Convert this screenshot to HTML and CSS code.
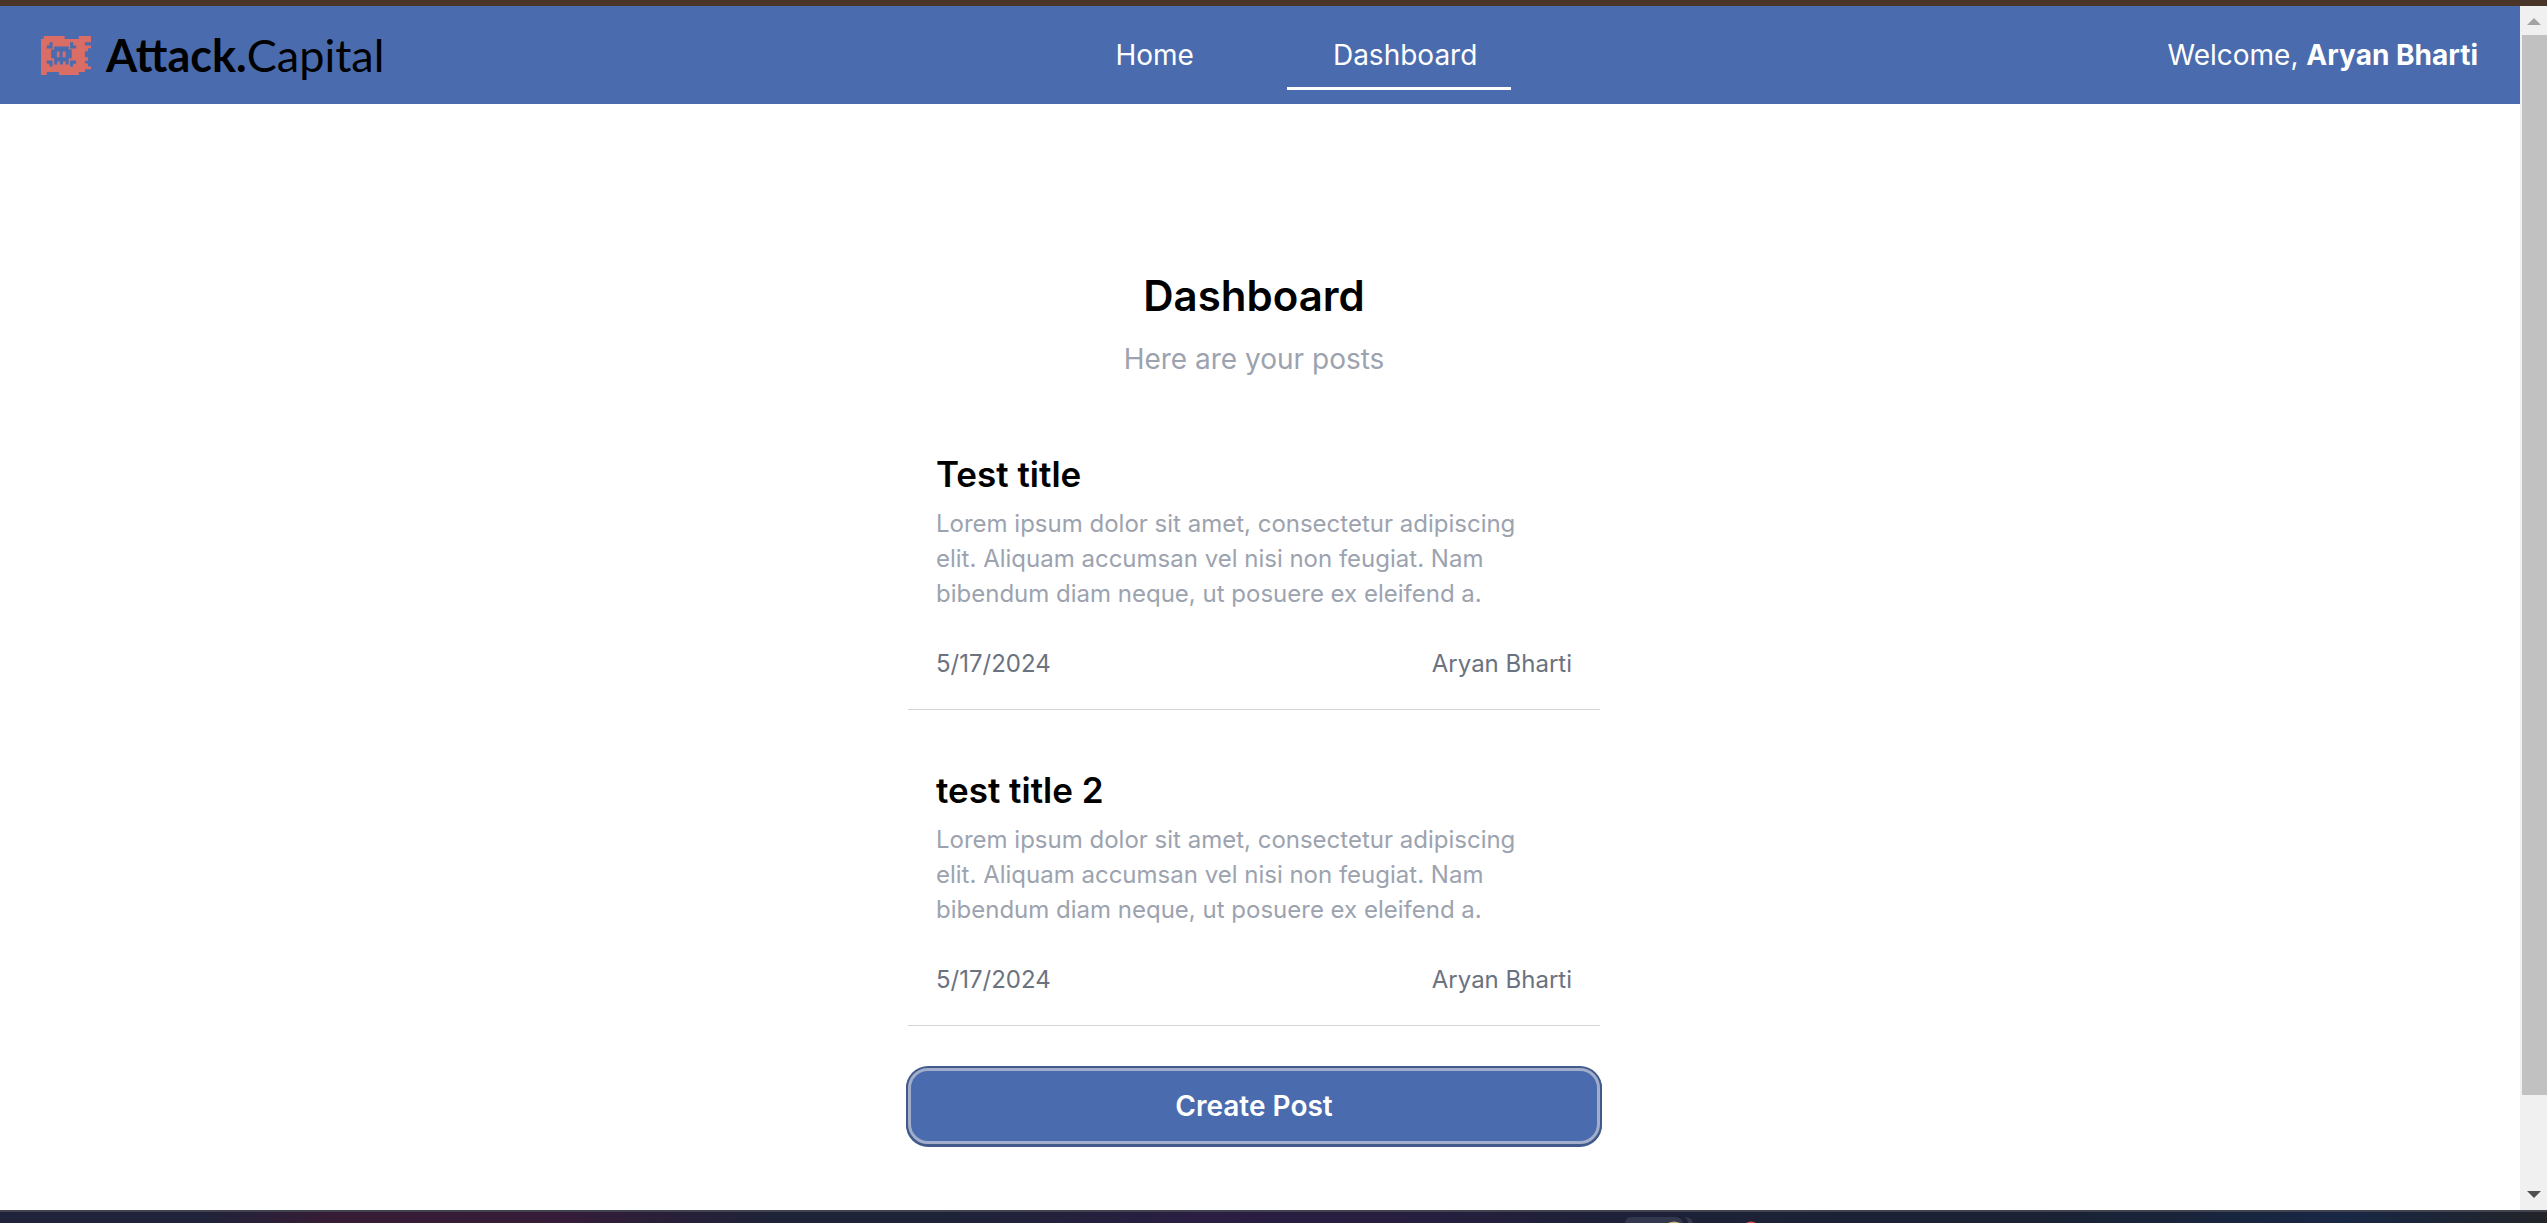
FILE: index.html
```html
<!DOCTYPE html>
<html lang="en">
<head>
<meta charset="utf-8">
<meta name="viewport" content="width=device-width, initial-scale=1">
<title>Dashboard</title>
<link rel="stylesheet" href="styles.css">
</head>
<body>
<div class="window-edge"></div>
<div class="viewport">
  <div class="page">
    <header class="header">
      <a class="logo" href="#">
        <svg class="logo-mark" viewBox="0 0 148 115" aria-hidden="true">
          <path class="logo-flag" d="M8 0H70V9H112V0H148V18H130V28H148V36H139V45H130V63H139V73H130V81H139V90H148V98H130V106H112V115H53V106H17V115H0V9H8Z"/>
          <path class="logo-skull" d="M39 31H82V40H91V66H82V84H73V75H65V84H56V75H48V84H39V66H30V40H39Z"/>
          <path class="logo-skull" d="M25 18H34V37H17V28H25ZM86 18H95V28H104V37H86ZM17 72H34V90H25V82H17ZM86 72H104V82H95V90H86Z"/>
          <path class="logo-flag" d="M47 46H55V63H47ZM64 46H73V63H64Z"/>
        </svg>
        <span class="logo-text"><b>Attack.</b>Capital</span>
      </a>
      <nav class="nav">
        <a class="nav-link" href="#">Home</a>
        <a class="nav-link nav-link-active" href="#" aria-current="page">Dashboard</a>
      </nav>
      <p class="welcome">Welcome, <strong>Aryan Bharti</strong></p>
    </header>
    <main class="main">
      <div class="column">
        <h1 class="heading">Dashboard</h1>
        <p class="subheading">Here are your posts</p>
        <article class="post">
          <h2 class="post-title">Test title</h2>
          <p class="post-body">Lorem ipsum dolor sit amet, consectetur adipiscing elit. Aliquam accumsan vel nisi non feugiat. Nam bibendum diam neque, ut posuere ex eleifend a.</p>
          <footer class="post-meta"><time datetime="2024-05-17">5/17/2024</time><span>Aryan Bharti</span></footer>
        </article>
        <article class="post">
          <h2 class="post-title">test title 2</h2>
          <p class="post-body">Lorem ipsum dolor sit amet, consectetur adipiscing elit. Aliquam accumsan vel nisi non feugiat. Nam bibendum diam neque, ut posuere ex eleifend a.</p>
          <footer class="post-meta"><time datetime="2024-05-17">5/17/2024</time><span>Aryan Bharti</span></footer>
        </article>
        <button class="create" type="button">Create Post</button>
      </div>
    </main>
  </div>
  <div class="scrollbar" aria-hidden="true">
    <svg class="scroll-arrow" viewBox="0 0 27 29"><path fill="#a3a3a3" d="M14 12L21 19H7Z"/></svg>
    <div class="scroll-track"><div class="scroll-thumb"></div></div>
    <svg class="scroll-arrow" viewBox="0 0 27 29"><path fill="#505050" d="M7 10H21L14 17Z"/></svg>
  </div>
</div>
<div class="taskbar" aria-hidden="true">
  <svg class="taskbar-icons" viewBox="0 0 134 11">
    <path fill="#34384e" d="M0 11V10Q1 5 7 5H50Q57 5 58 11ZM59 5Q67 5 68 11H63Q63 7 59 5Z"/>
    <path fill="#c9ad6a" d="M43 11Q49 8 55 11Z"/>
    <path fill="#e25555" d="M121 11Q126 8 131 11Z"/>
  </svg>
</div>
</body>
</html>
```

FILE: styles.css
```css
* {
  box-sizing: border-box;
  margin: 0;
}

body {
  display: flex;
  flex-direction: column;
  min-height: 100vh;
  background: #fff;
  color: #000;
  font-family: Inter, sans-serif;
  font-size: 28px;
  line-height: 42px;
}

a {
  color: inherit;
  text-decoration: none;
}

.window-edge {
  height: 6px;
  background: #4a3529;
}

.viewport {
  display: flex;
  flex: 1;
}

.page {
  flex: 1;
}

.header {
  display: flex;
  align-items: center;
  justify-content: space-between;
  height: 98px;
  padding: 0 42px 0 41px;
  background: #4a6cae;
  color: #fff;
}

.logo {
  display: flex;
  align-items: center;
  gap: 15px;
  color: #000;
}

.logo-mark {
  width: 50px;
  height: 39px;
}

.logo-flag {
  fill: #da6d66;
}

.logo-skull {
  fill: #4a6cae;
}

.logo-text {
  font-family: Lato, sans-serif;
  font-size: 45px;
  line-height: 56px;
}

.nav {
  display: flex;
  gap: 59px;
  padding-left: 29px;
}

.nav-link {
  padding: 14px 34px 11px 46px;
  border-bottom: 3px solid transparent;
}

.nav-link-active {
  border-color: #fff;
}

.welcome strong {
  font-weight: 700;
}

.main {
  display: flex;
  justify-content: center;
  padding: 164px 12px 64px 0;
}

.column {
  width: 692px;
  max-width: 100%;
}

.heading {
  margin-bottom: 14px;
  font-size: 42px;
  font-weight: 600;
  line-height: 56px;
  text-align: center;
}

.subheading {
  margin-bottom: 14px;
  color: #9ca3af;
  text-align: center;
}

.post {
  padding: 56px 28px 28px;
  border-bottom: 1px solid #d4d4d4;
  font-size: 24px;
  line-height: 35px;
}

.post-title {
  margin-bottom: 7px;
  font-size: 35px;
  font-weight: 600;
  line-height: 49px;
}

.post-body {
  margin-bottom: 35px;
  padding-right: 28px;
  color: #9ca3af;
}

.post-meta {
  display: flex;
  justify-content: space-between;
  color: #6b7280;
}

.create {
  width: 100%;
  margin-top: 42px;
  padding: 14px;
  border: 3px solid #a1adca;
  border-radius: 20px;
  background: #4a6cae;
  box-shadow: 0 0 0 2px #3f5a8b, 0 1px 0 2px #3f5a8b;
  color: #fff;
  font: 600 28px/42px Inter, sans-serif;
}

.scrollbar {
  display: flex;
  flex-direction: column;
  width: 27px;
  background: #f0f0f0;
}

.scroll-arrow {
  width: 27px;
  height: 29px;
}

.scroll-track {
  flex: 1;
  padding-left: 2px;
}

.scroll-thumb {
  height: 92.5%;
  background: #c1c1c1;
}

.taskbar {
  height: 13px;
  padding-left: 63.8%;
  border-top: 2px solid #41444f;
  background: linear-gradient(90deg, #20243a, #20233a 8%, #371c35 13%, #351c38 22%, #1e2338 30%, #1e2338 37%, #2a1e42 47%, #271e40 55%, #1e2138 63%, #1a2233 80%, #182745 92%, #222428);
}

.taskbar-icons {
  display: block;
  width: 134px;
  height: 11px;
}
```
